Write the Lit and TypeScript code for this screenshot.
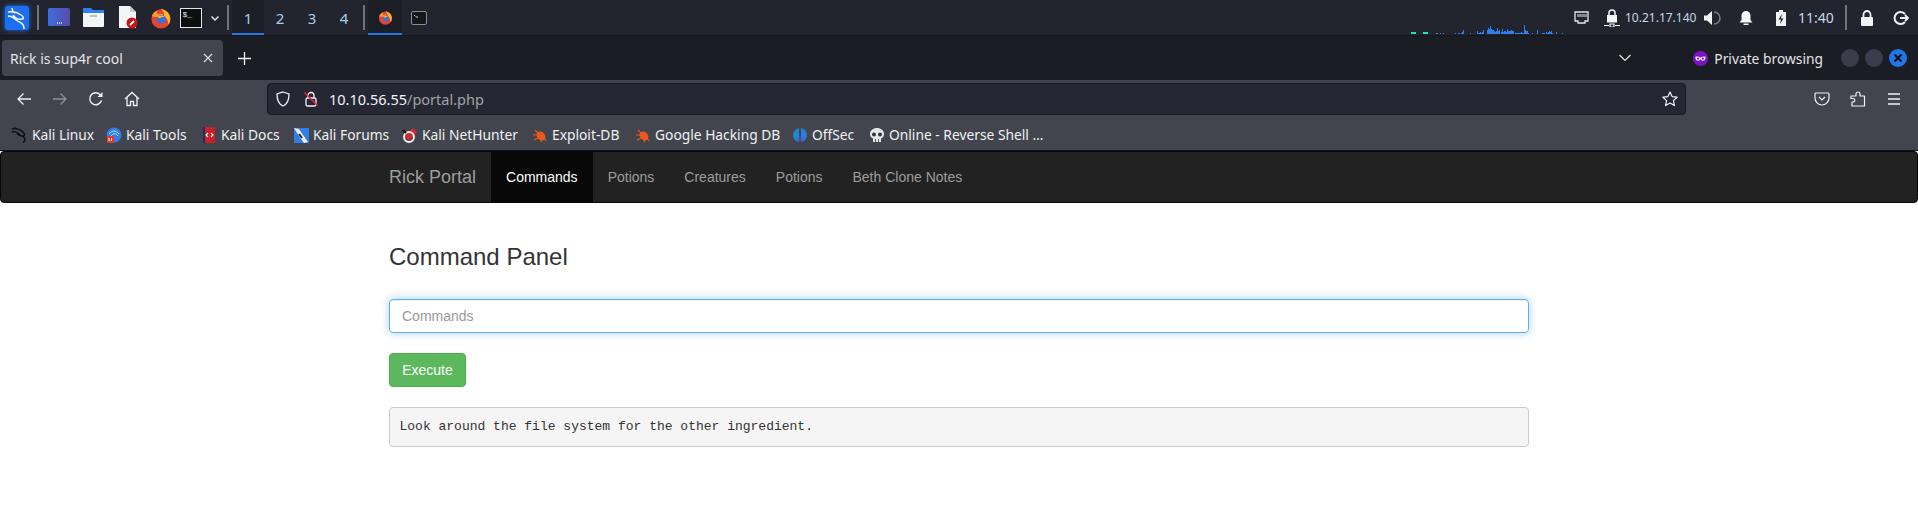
import { LitElement, html, css, svg } from 'lit';
import { customElement } from 'lit/decorators.js';

const icon = (size: number, box: string, body: unknown) =>
  html`<svg width=${size} height=${size} viewBox=${box} fill="none">${body}</svg>`;

const firefox = (size: number) =>
  icon(size, '0 0 24 24', svg`
    <circle cx="12" cy="13" r="10.5" fill="#e8432e"/>
    <path d="M12 2c5 1 10 5 10 11 0 3-1 5-2 6 0-4-2-8-5-9 1-2 0-5-3-8z" fill="#fdb52a"/>
    <path d="M2 10c1-3 3-5 6-6-1 2 0 3 1 4 2-1 4-1 6 1-3 0-5 1-6 2-3 0-5 0-7-1z" fill="#ff9a22"/>
    <circle cx="12.5" cy="13.5" r="5" fill="#3f6fd8"/>
    <path d="M8 10c3-1 6-1 8 1-2 0-4 0-5 1-1 0-2-1-3-2z" fill="#ffb92e"/>`);

const bug = icon(16, '0 0 16 16', svg`
  <ellipse cx="9" cy="9" rx="4" ry="5" transform="rotate(-40 9 9)" fill="#e8591e"/>
  <path d="M1 8h4M3 3l3 3M2 13l4-2M9 15l1-3M14 14l-2-3" stroke="#e8591e" stroke-width="1.2"/>`);

const bookmarks = [
  { label: 'Kali Linux', cls: 'w1', icon: icon(17, '0 0 17 17', svg`<path d="M1 3c4-1 8 0 11 3 2 2 2 4 0 4-3 0-5-1-6-3M1 6c3-1 5 0 7 2 2 3 6 2 6 5 0 2-1 3-2 3" stroke="#0b0c0f" stroke-width="1.400"/><path d="M3 1l3 2" stroke="#0b0c0f"/>`) },
  { label: 'Kali Tools', cls: 'w2', icon: icon(16, '0 0 16 16', svg`<circle cx="8" cy="8" r="7.5" fill="#2f7fe6"/><path d="M3 7c3-4 7-4 10 0M5 9c2-3 5-3 7 0" stroke="#bfe0ff" stroke-width="1"/><rect x="1" y="9" width="7" height="7" rx="1" fill="#e8382e"/><path d="M3 11v3M5.500 11v3" stroke="#fff"/>`) },
  { label: 'Kali Docs', cls: 'w3', icon: icon(16, '0 0 16 16', svg`<rect x="2" y="0" width="12" height="16" fill="#c91f25"/><rect x="2" y="0" width="2" height="16" fill="#1d2c6b"/><path d="M7 6l-2 2 2 2M10 6l2 2-2 2" stroke="#fff" stroke-width="1.1"/>`) },
  { label: 'Kali Forums', cls: 'w4', icon: icon(16, '0 0 16 16', svg`<rect x="1" y="1" width="15" height="15" rx="1" fill="#2f7fe6"/><path d="M1 1l5 1 4 6 5 7-4 1-5-7z" fill="#f2f3f5"/><path d="M6 7l3 4" stroke="#222a36" stroke-width="2"/>`) },
  { label: 'Kali NetHunter', cls: 'w5', icon: icon(16, '0 0 16 16', svg`<path d="M2 9l9-8 4 4-8 9z" fill="#d8282f"/><circle cx="7" cy="10" r="5" stroke="#f1f2f4" stroke-width="2"/><path d="M1 3l3 3" stroke="#111" stroke-width="2"/>`) },
  { label: 'Exploit-DB', cls: 'w6', icon: bug },
  { label: 'Google Hacking DB', cls: 'w7', icon: bug },
  { label: 'OffSec', cls: 'w8', icon: icon(16, '0 0 16 16', svg`<path d="M7 1C3 2 1 5 1 8s2 6 6 7z" fill="#1e86c9"/><path d="M9 1c4 1 6 4 6 7s-2 6-6 7z" fill="#2a7dd6"/><path d="M7.500 9v6h1V9z" fill="#6a3fd0"/><path d="M6 10c0 3 .5 4 1 5H5zM10 10c0 3-.5 4-1 5h2z" fill="#6a3fd0"/>`) },
  { label: 'Online - Reverse Shell …', cls: 'w9', icon: icon(16, '0 0 16 16', svg`<path d="M8 1c4 0 7 2.500 7 6 0 2.500-1 3.500-3 4.500V15H4v-3.500C2 10.500 1 9.500 1 7c0-3.500 3-6 7-6z" fill="#e3e5e8"/><circle cx="5" cy="7.500" r="2" fill="#33363c"/><circle cx="11" cy="7.500" r="2" fill="#33363c"/><path d="M6.500 12v3M9.500 12v3" stroke="#5c5f66"/>`) },
];

// 1px columns of the panel's network graph, left to right
const sparkline =
  '22222000000022222' +
  '00000000110010010000000000010011012400000010000003112124000' +
  '46585443' +
  '23634025233253334330' +
  '11111121194331' +
  '00010000' +
  '40000' +
  '1110212323100020' +
  '00001';

@customElement('app-root')
export class AppRoot extends LitElement {
  static styles = css`
    :host {
      display: block;
      width: 1918px;
      height: 516px;
      overflow: hidden;
      background: #fff;
      font-family: 'Noto Sans', sans-serif;
    }
    svg { display: block; flex: none; }

    /* desktop panel */
    .panel {
      height: 35px;
      display: flex;
      align-items: center;
      background: #22252e;
      border-bottom: 1px solid #15171c;
      color: #dfe4ea;
    }
    .slot {
      height: 100%;
      display: flex;
      align-items: center;
      justify-content: center;
      flex: none;
    }
    .s34 { width: 34px; }
    .s35 { width: 35px; }
    .s32 { width: 32px; }
    .s28 { width: 28px; }
    .s19 { width: 19px; }
    .s26 { width: 26px; }
    .logo svg { filter: drop-shadow(0 0 2px #1d6ff2); }
    .vpn { margin-left: 2px; }
    .sound { margin-right: 4px; }
    .sep {
      width: 8px;
      height: 100%;
      display: flex;
      align-items: center;
      justify-content: center;
      flex: none;
    }
    .sep::before {
      content: '';
      width: 2px;
      height: 25px;
      background: #70737a;
    }
    .ws {
      width: 32px;
      font-size: 15px;
      color: #a9cdef;
      box-sizing: border-box;
      border-bottom: 2px solid transparent;
      padding-top: 2px;
    }
    .win { width: 34px; box-sizing: border-box; border-bottom: 2px solid transparent; padding-top: 2px; }
    .active { background: #1c1e26; border-bottom-color: #2277e0; }
    .spark {
      margin-left: auto;
      align-self: flex-end;
      height: 10px;
      display: flex;
      align-items: flex-end;
      margin-bottom: 1px;
    }
    .spark i { width: 1px; background: #2b80ee; flex: none; }
    .spark i.teal { background: #1ee0b8; }
    .gap2 { width: 2px; flex: none; }
    .ip { font-size: 12px; color: #c5d8e8; width: 74px; flex: none; }
    .clock { font-size: 14px; color: #c5d8e8; width: 44px; flex: none; }

    /* tab strip */
    .tabs {
      height: 44px;
      display: flex;
      align-items: center;
      background: #1b1d24;
      color: #e6e7ea;
    }
    .tab {
      width: 221px;
      height: 36px;
      margin-left: 2px;
      box-sizing: border-box;
      padding: 0 10px 0 8px;
      display: flex;
      align-items: center;
      justify-content: space-between;
      background: #42454e;
      border-radius: 4px;
      font-size: 14px;
      color: #e2e3e6;
    }
    .plus { margin-left: 15px; }
    .chev { margin-left: auto; margin-right: 61px; }
    .priv {
      display: flex;
      align-items: center;
      gap: 6px;
      font-size: 13.800px;
      color: #e2e3e6;
      margin-right: 18px;
    }
    .dots { display: flex; gap: 6px; margin-right: 11px; }
    .dot { width: 18px; height: 18px; border-radius: 50%; background: #3a3e4b; }
    .dot.close {
      background: #2277e8;
      display: flex;
      align-items: center;
      justify-content: center;
    }

    /* browser toolbar */
    .toolbar {
      height: 35px;
      padding: 3px 0 0 6px;
      box-sizing: border-box;
      display: flex;
      align-items: center;
      background: #42454e;
      color: #f0f1f3;
    }
    .tool {
      width: 36px;
      display: flex;
      justify-content: center;
      flex: none;
    }
    .url {
      flex: 1;
      height: 32px;
      margin-left: 117px;
      box-sizing: border-box;
      display: flex;
      align-items: center;
      background: #252733;
      border: 1px solid #17181e;
      border-radius: 4px;
      padding: 0 7px;
      font-size: 14.500px;
      color: #f2f3f5;
    }
    .url .lock { margin: 0 10px 0 12px; }
    .url .path { color: #a0a2a8; }
    .url .star { margin-left: auto; }
    .tools-right { display: flex; margin-left: 118px; margin-right: 6px; }

    .marks {
      height: 36px;
      box-sizing: border-box;
      padding: 4px 0 0 11px;
      display: flex;
      align-items: center;
      background: #42454e;
      font-size: 13.800px;
      color: #f0f1f3;
      border-bottom: 1px solid #111217;
    }
    .mark { display: flex; align-items: center; gap: 4px; white-space: nowrap; flex: none; }
    .w1 { width: 95px; }
    .w2 { width: 95px; }
    .w3 { width: 92px; }
    .w4 { width: 109px; }
    .w5 { width: 130px; }
    .w6 { width: 103px; }
    .w7 { width: 157px; }
    .w8 { width: 77px; }

    /* page, bootstrap 3 look */
    .page { font-family: 'Liberation Sans', Arial, sans-serif; font-size: 14px; color: #333; }
    .navbar {
      height: 52px;
      box-sizing: border-box;
      background: #222;
      border: 1px solid #080808;
      border-radius: 4px;
      padding-left: 388px;
      display: flex;
      color: #9d9d9d;
    }
    .brand { font-size: 18px; padding-right: 15px; line-height: 50px; }
    .nav { padding: 0 15px; line-height: 50px; }
    .nav.on { background: #080808; color: #fff; }
    .content { width: 1140px; margin: 0 auto; }
    h3 {
      font-size: 24px;
      font-weight: 500;
      line-height: 26px;
      margin: 41px 0 29px;
    }
    .input {
      height: 34px;
      box-sizing: border-box;
      padding: 0 12px;
      display: flex;
      align-items: center;
      color: #999;
      border: 1px solid #66afe9;
      border-radius: 4px;
      box-shadow: inset 0 1px 1px rgba(0, 0, 0, 0.075), 0 0 8px rgba(102, 175, 233, 0.6);
    }
    .btn {
      width: 77px;
      height: 34px;
      margin: 20px 0;
      box-sizing: border-box;
      display: flex;
      align-items: center;
      justify-content: center;
      color: #fff;
      background: #5cb85c;
      border: 1px solid #4cae4c;
      border-radius: 4px;
    }
    pre {
      margin: 0;
      padding: 9.500px;
      font: 13px/18.570px 'Liberation Mono', 'Courier New', monospace;
      color: #333;
      background: #f5f5f5;
      border: 1px solid #ccc;
      border-radius: 4px;
    }
  `;

  private renderPanel() {
    return html`
      <div class="panel">
        <div class="slot s34 logo">
          ${icon(24, '0 0 24 24', svg`
            <rect width="24" height="24" rx="3" fill="#1d6ff2"/>
            <path d="M3 6c5-1 9 0 13 3 3 2 3 4 1 4-4 1-7-1-9-4M3 10c3 0 5 1 7 3 1 2 4 2 6 4 2 1 3 3 3 6M7 2c0 2 1 4 3 5" stroke="#eef5ff" stroke-width="1.500"/>`)}
        </div>
        <div class="sep"></div>
        <div class="slot s34">
          ${icon(23, '0 0 23 23', svg`
            <defs><linearGradient id="scr" x1="0" x2="1"><stop offset="0" stop-color="#3b6fe0"/><stop offset="1" stop-color="#5a4aa8"/></linearGradient></defs>
            <rect y="2" width="22" height="18" rx="1.500" fill="url(#scr)"/>
            <path d="M9 17h5" stroke="#e8ecf5" stroke-dasharray="1 1" stroke-width="1.500"/>`)}
        </div>
        <div class="slot s34">
          ${icon(23, '0 0 23 23', svg`
            <path d="M1 2h8l2 2h11v6H1z" fill="#2e7ff0"/>
            <path d="M1 7h21v13a1 1 0 0 1-1 1H2a1 1 0 0 1-1-1z" fill="#f3f4f6"/>
            <rect x="8" y="9" width="7" height="2" fill="#bdbfc4"/>`)}
        </div>
        <div class="slot s35">
          ${icon(23, '0 0 23 23', svg`
            <path d="M3 0h11l6 6v16H3z" fill="#f4f5f6"/>
            <path d="M14 0l6 6h-6z" fill="#c8cacd"/>
            <circle cx="16" cy="17" r="5.500" fill="#c9141c"/>
            <path d="M14 19l4-4" stroke="#fff" stroke-width="1.800"/>`)}
        </div>
        <div class="slot s32">${firefox(22)}</div>
        <div class="slot s28">
          ${icon(22, '0 0 22 20', svg`
            <rect x=".5" y=".5" width="21" height="19" fill="#0d0e11" stroke="#e4e5e8"/>
            <text x="2.500" y="8.500" font-size="8" font-family="Liberation Mono, monospace" fill="#e4e5e8">$_</text>`)}
        </div>
        <div class="slot s19">
          ${icon(10, '0 0 10 10', svg`<path d="M1.500 3.500L5 7l3.500-3.500" stroke="#e4e5e8" stroke-width="1.500"/>`)}
        </div>
        <div class="sep"></div>
        <div class="slot ws active">1</div>
        <div class="slot ws">2</div>
        <div class="slot ws">3</div>
        <div class="slot ws">4</div>
        <div class="sep"></div>
        <div class="slot win active">${firefox(15)}</div>
        <div class="slot win">
          ${icon(16, '0 0 16 16', svg`
            <rect x=".5" y="1.500" width="15" height="13" rx="1.500" fill="#16171b" stroke="#8b8d92"/>
            <path d="M3 5l1.500 1.500M5 7h2" stroke="#c8cacd"/>`)}
        </div>
        <div class="spark">
          ${[...sparkline].map((h, i) => html`<i class=${i < 17 ? 'teal' : ''} style="height:${h}px"></i>`)}
        </div>
        <div class="gap2"></div>
        <div class="slot s32">
          ${icon(15, '0 0 15 15', svg`
            <path d="M1 2h13v9h-3v2H4v-2H1z" stroke="#e6e7ea" stroke-width="1.300"/>
            <path d="M4 4v3M6 4v3M8 4v3M10 4v3M12 4v3" stroke="#e6e7ea"/>`)}
        </div>
        <div class="slot s26 vpn">
          ${icon(18, '0 0 18 18', svg`
            <rect x="4" y="6" width="10" height="7.500" fill="#f2f3f5"/>
            <path d="M6 6V4a3 3 0 0 1 6 0v2" stroke="#f2f3f5" stroke-width="1.500"/>
            <path d="M1 16.500h5M7 15h4v3H7zM12 16.500h5" stroke="#f2f3f5" stroke-width="1.200"/>`)}
        </div>
        <div class="ip">10.21.17.140</div>
        <div class="slot s26 sound">
          ${icon(18, '0 0 18 18', svg`
            <path d="M1 6.500h3L9 2v14l-5-4.500H1z" fill="#f2f3f5"/>
            <path d="M11 3a6 6 0 0 1 0 12" stroke="#777a80" stroke-width="1.500"/>`)}
        </div>
        <div class="slot s34">
          ${icon(16, '0 0 16 16', svg`
            <path d="M8 1a4.500 4.500 0 0 1 4.500 4.500V10l2 2.500h-13l2-2.500V5.500A4.500 4.500 0 0 1 8 1z" fill="#f2f3f5"/>
            <rect x="5.500" y="13.500" width="5" height="1.500" fill="#f2f3f5"/>`)}
        </div>
        <div class="slot s35">
          ${icon(16, '0 0 16 16', svg`
            <path d="M3 2h10v14H3z" fill="#f2f3f5"/><rect x="6" y="0" width="4" height="2" fill="#f2f3f5"/>
            <path d="M9 4L5.500 9.500H8L7 14l3.500-5.500H8z" fill="#22252e"/>`)}
        </div>
        <div class="clock">11:40</div>
        <div class="sep"></div>
        <div class="slot s34">
          ${icon(16, '0 0 16 16', svg`
            <rect x="2" y="7" width="12" height="9" rx="1" fill="#f2f3f5"/>
            <path d="M4.500 7V4.500a3.500 3.500 0 0 1 7 0V7" stroke="#f2f3f5" stroke-width="1.800"/>`)}
        </div>
        <div class="slot s34">
          ${icon(16, '0 0 16 16', svg`
            <path d="M12 4a6 6 0 1 0 0 8" stroke="#f2f3f5" stroke-width="2"/>
            <path d="M7 8h8M12 5l3 3-3 3" stroke="#f2f3f5" stroke-width="1.800"/>`)}
        </div>
      </div>
    `;
  }

  private renderTabs() {
    return html`
      <div class="tabs">
        <div class="tab">
          <span>Rick is sup4r cool</span>
          ${icon(10, '0 0 10 10', svg`<path d="M1 1l8 8M9 1l-8 8" stroke="#e2e3e6" stroke-width="1.100"/>`)}
        </div>
        <div class="plus">
          ${icon(13, '0 0 13 13', svg`<path d="M6.500 0v13M0 6.500h13" stroke="#f0f1f3" stroke-width="1.300"/>`)}
        </div>
        <div class="chev">
          ${icon(14, '0 0 14 14', svg`<path d="M1.500 4l5.500 5.500L12.500 4" stroke="#e2e3e6" stroke-width="1.200"/>`)}
        </div>
        <div class="priv">
          ${icon(15, '0 0 16 16', svg`
            <circle cx="8" cy="8" r="8" fill="#7b14c8"/>
            <path d="M2.500 6.500c2-1 3.500-.5 5.500.5 2-1 3.500-1.500 5.500-.5 0 3-1.500 4-3 4-1 0-2-1.500-2.500-1.500s-1.500 1.500-2.500 1.500c-1.500 0-3-1-3-4z" fill="#f4ecfb"/>
            <circle cx="5.500" cy="8" r="1.200" fill="#7b14c8"/><circle cx="10.500" cy="8" r="1.200" fill="#7b14c8"/>`)}
          <span>Private browsing</span>
        </div>
        <div class="dots">
          <div class="dot"></div>
          <div class="dot"></div>
          <div class="dot close">
            ${icon(10, '0 0 10 10', svg`<path d="M1.500 1.500l7 7M8.500 1.500l-7 7" stroke="#10141c" stroke-width="2.200"/>`)}
          </div>
        </div>
      </div>
    `;
  }

  private renderToolbar() {
    return html`
      <div class="toolbar">
        <div class="tool">
          ${icon(16, '0 0 16 16', svg`<path d="M15 8H2M7.500 2.500L2 8l5.500 5.500" stroke="#f0f1f3" stroke-width="1.300"/>`)}
        </div>
        <div class="tool">
          ${icon(16, '0 0 16 16', svg`<path d="M1 8h13M8.500 2.500L14 8l-5.500 5.500" stroke="#8e9096" stroke-width="1.300"/>`)}
        </div>
        <div class="tool">
          ${icon(16, '0 0 16 16', svg`<path d="M13.500 9.500A6 6 0 1 1 12 3.500L14 5.500" stroke="#f0f1f3" stroke-width="1.400"/><path d="M14.500 1v5h-5" fill="#f0f1f3"/>`)}
        </div>
        <div class="tool">
          ${icon(16, '0 0 16 16', svg`<path d="M1 8l7-6.500L15 8M3 6.500V14.500h3.500v-4h3v4H13V6.500" stroke="#f0f1f3" stroke-width="1.300"/>`)}
        </div>
        <div class="url">
          ${icon(16, '0 0 16 16', svg`<path d="M8 1l6 2c0 6-1 10-6 12C3 13 2 9 2 3z" stroke="#f0f1f3" stroke-width="1.300"/>`)}
          <span class="lock">
            ${icon(16, '0 0 16 16', svg`
              <rect x="3" y="7" width="10" height="8" rx="1.500" stroke="#f0f1f3" stroke-width="1.300"/>
              <path d="M5 7V4.500a3 3 0 0 1 6 0V7" stroke="#f0f1f3" stroke-width="1.300"/>
              <path d="M1.500 1.500l13 13" stroke="#e02a4a" stroke-width="1.500"/>`)}
          </span>
          <span>10.10.56.55<span class="path">/portal.php</span></span>
          <span class="star">
            ${icon(16, '0 0 16 16', svg`<path d="M8 1l2.100 4.600 5 .6-3.700 3.400 1 5L8 12.100 3.600 14.600l1-5L.9 6.200l5-.6z" stroke="#f0f1f3" stroke-width="1.200" stroke-linejoin="round"/>`)}
          </span>
        </div>
        <div class="tools-right">
          <div class="tool">
            ${icon(16, '0 0 16 16', svg`<path d="M2 2h12a1 1 0 0 1 1 1v4a7 7 0 0 1-14 0V3a1 1 0 0 1 1-1z" stroke="#f0f1f3" stroke-width="1.200"/><path d="M5 6l3 3 3-3" stroke="#f0f1f3" stroke-width="1.200"/>`)}
          </div>
          <div class="tool">
            ${icon(16, '0 0 16 16', svg`<path d="M2 15V11h1a1.500 1.500 0 0 0 0-3.500H1V5h5V3a2 2 0 0 1 4 0v2h4.500v10z" stroke="#f0f1f3" stroke-width="1.200" stroke-linejoin="round"/>`)}
          </div>
          <div class="tool">
            ${icon(16, '0 0 16 16', svg`<path d="M2 3h12M2 8h12M2 13h12" stroke="#f0f1f3" stroke-width="1.300"/>`)}
          </div>
        </div>
      </div>
      <div class="marks">
        ${bookmarks.map(b => html`<div class="mark ${b.cls}">${b.icon}<span>${b.label}</span></div>`)}
      </div>
    `;
  }

  render() {
    return html`
      ${this.renderPanel()} ${this.renderTabs()} ${this.renderToolbar()}
      <div class="page">
        <div class="navbar">
          <div class="brand">Rick Portal</div>
          <div class="nav on">Commands</div>
          <div class="nav">Potions</div>
          <div class="nav">Creatures</div>
          <div class="nav">Potions</div>
          <div class="nav">Beth Clone Notes</div>
        </div>
        <div class="content">
          <h3>Command Panel</h3>
          <div class="input">Commands</div>
          <div class="btn">Execute</div>
          <pre>Look around the file system for the other ingredient.</pre>
        </div>
      </div>
    `;
  }
}
